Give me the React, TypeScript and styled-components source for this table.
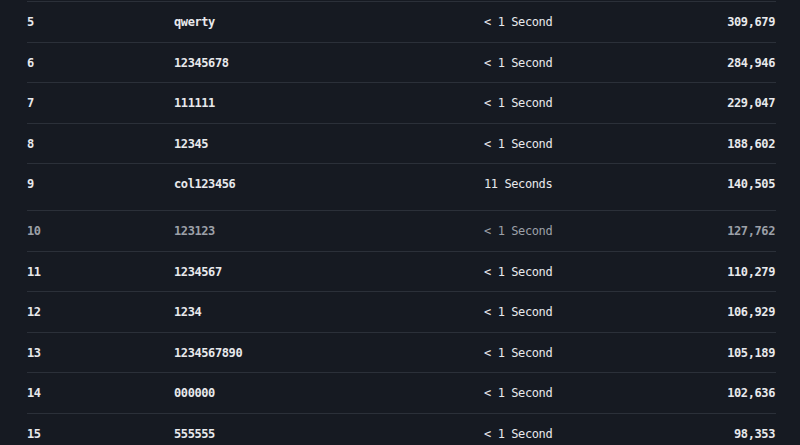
import React from "react";
import styled, { createGlobalStyle } from "styled-components";

const GlobalStyle = createGlobalStyle`
  html, body {
    margin: 0;
    padding: 0;
    background: #161a22;
  }
  body {
    font-family: "DejaVu Sans Mono", "Liberation Mono", monospace;
  }
`;

const Page = styled.main`
  width: 800px;
  height: 445px;
  overflow: hidden;
  box-sizing: border-box;
  padding: 1px 24px 0 27px;
  background: #161a22;
`;

const Table = styled.div`
  display: flex;
  flex-direction: column;
`;

const Row = styled.div<{ $tall?: boolean; $dim?: boolean }>`
  display: grid;
  grid-template-columns: 147px 310px 1fr auto;
  align-items: start;
  border-top: 1px solid #2b3039;
  padding-top: 13px;
  padding-bottom: ${(p) => (p.$tall ? "19.4px" : "12.5px")};
  line-height: 14px;
  font-size: 12px;
  letter-spacing: -0.4px;
  color: ${(p) => (p.$dim ? "#9ca0a8" : "#e8e9ec")};
`;

const Rank = styled.span`
  font-weight: 700;
`;

const Password = styled.span`
  font-weight: 700;
`;

const Time = styled.span`
  font-weight: 400;
  color: inherit;
`;

const Count = styled.span`
  font-weight: 700;
  text-align: right;
  padding-right: 1px;
`;

type Entry = {
  rank: number;
  password: string;
  time: string;
  count: string;
};

const rows: Entry[] = [
  { rank: 5, password: "qwerty", time: "< 1 Second", count: "309,679" },
  { rank: 6, password: "12345678", time: "< 1 Second", count: "284,946" },
  { rank: 7, password: "111111", time: "< 1 Second", count: "229,047" },
  { rank: 8, password: "12345", time: "< 1 Second", count: "188,602" },
  { rank: 9, password: "col123456", time: "11 Seconds", count: "140,505" },
  { rank: 10, password: "123123", time: "< 1 Second", count: "127,762" },
  { rank: 11, password: "1234567", time: "< 1 Second", count: "110,279" },
  { rank: 12, password: "1234", time: "< 1 Second", count: "106,929" },
  { rank: 13, password: "1234567890", time: "< 1 Second", count: "105,189" },
  { rank: 14, password: "000000", time: "< 1 Second", count: "102,636" },
  { rank: 15, password: "555555", time: "< 1 Second", count: "98,353" },
];

const App: React.FC = () => {
  return (
    <>
      <GlobalStyle />
      <Page>
        <Table>
          {rows.map((item) => (
            <Row key={item.rank} $tall={item.rank === 9} $dim={item.rank === 10}>
              <Rank>{item.rank}</Rank>
              <Password>{item.password}</Password>
              <Time>{item.time}</Time>
              <Count>{item.count}</Count>
            </Row>
          ))}
        </Table>
      </Page>
    </>
  );
};

export default App;
